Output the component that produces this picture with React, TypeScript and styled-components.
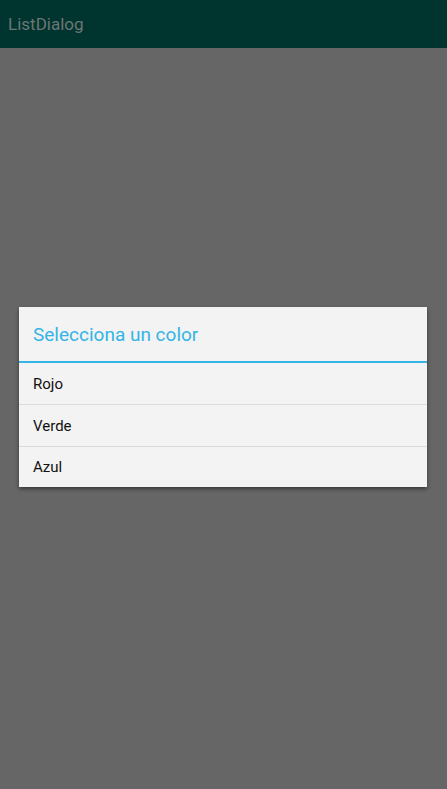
import styled, { createGlobalStyle } from "styled-components";

const GlobalStyle = createGlobalStyle`
    html, body {
        margin: 0;
        padding: 0;
        height: 100%;
    }
    body {
        font-family: Roboto, "Liberation Sans", sans-serif;
        background-color: #666666;
    }
    #root {
        height: 100%;
    }
`;

const Screen = styled.div`
    display: flex;
    flex-direction: column;
    width: 100%;
    height: 100vh;
    background-color: #666666;
`;

const ActionBar = styled.div`
    display: flex;
    align-items: center;
    height: 48px;
    padding-left: 8px;
    background-color: #00342f;
    flex-shrink: 0;
`;

const ActionTitle = styled.div`
    color: #6b7774;
    font-size: 17px;
`;

const Content = styled.div`
    flex: 1;
    display: flex;
    flex-direction: column;
    justify-content: flex-start;
    padding: 259px 20px 0 19px;
`;

const Dialog = styled.div`
    display: flex;
    flex-direction: column;
    background-color: #f3f3f3;
    box-shadow: 0 2px 4px rgba(0, 0, 0, 0.45);
`;

const DialogTitle = styled.div`
    display: flex;
    align-items: center;
    height: 54px;
    padding-left: 14px;
    color: #33b5e5;
    font-size: 19px;
    border-bottom: 2px solid #33b5e5;
`;

const ListItem = styled.div<{ $last?: boolean }>`
    display: flex;
    align-items: center;
    height: ${(p) => (p.$last ? "40px" : "41px")};
    padding-left: 14px;
    color: #111111;
    font-size: 15px;
    border-bottom: ${(p) => (p.$last ? "none" : "1px solid #dcdcdc")};
`;

export default function App() {
    const colors = ["Rojo", "Verde", "Azul"];

    return (
        <>
            <GlobalStyle />
            <Screen>
                <ActionBar>
                    <ActionTitle>ListDialog</ActionTitle>
                </ActionBar>
                <Content>
                    <Dialog>
                        <DialogTitle>Selecciona un color</DialogTitle>
                        {colors.map((c, i) => (
                            <ListItem key={c} $last={i === colors.length - 1}>
                                {c}
                            </ListItem>
                        ))}
                    </Dialog>
                </Content>
            </Screen>
        </>
    );
}
